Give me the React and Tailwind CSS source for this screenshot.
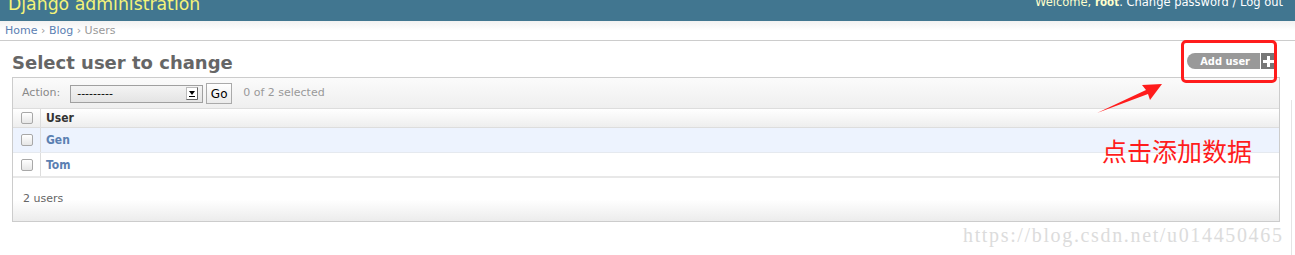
import React from 'react'

const rows = ['Gen', 'Tom']

const boldFont = "font-bold font-stretch-condensed font-['DejaVu_Sans_Condensed','DejaVu_Sans',sans-serif]"

function Checkbox() {
  return (
    <span className="block w-[12px] h-[12px] rounded-[2px] border border-[#a8a8a8] bg-gradient-to-b from-white to-[#e6e6e6]" />
  )
}

export default function App() {
  return (
    <div className="relative w-[1295px] h-[255px] overflow-hidden bg-white font-['DejaVu_Sans',sans-serif] text-[11px] text-[#333]">
      {/* Header */}
      <div className="h-[21px] bg-[#417690] flex justify-between items-start overflow-hidden pl-[8px] pr-[12px]">
        <h1 className="-mt-[6px] text-[17.3px] leading-[21px] text-[#f4f379] whitespace-nowrap">Django administration</h1>
        <div className="-mt-[4px] text-[11.5px] leading-[13px] text-white whitespace-nowrap">
          <span className="text-[#ffffcc]">Welcome, </span>
          <strong className={`${boldFont} text-[#ffffcc]`}>root</strong>
          <span>. Change password / Log out</span>
        </div>
      </div>

      {/* Breadcrumbs */}
      <div className="h-[20px] border-b border-[#ccc] bg-gradient-to-b from-[#f1f1f1] via-white to-white px-[5px] leading-[19px] text-[#999]">
        <span className="text-[#5b80b2]">Home</span> › <span className="text-[#5b80b2]">Blog</span> › Users
      </div>

      {/* Content */}
      <div className="pl-[12px] pr-[15px]">
        <div className="h-[36px] flex justify-between items-start">
          <h1 className="pt-[11px] text-[18px] leading-[22px] font-bold text-[#666]">Select user to change</h1>
          <div className="mt-[12px] mr-[4px] h-[16px] flex">
            <span className={`flex items-center h-full pl-[13px] pr-[10px] rounded-l-[8px] bg-[#999] text-white leading-none ${boldFont}`}>
              Add user
            </span>
            <span className="ml-[1px] w-[15px] h-full bg-[#777] flex items-center justify-center">
              <svg width="11" height="11" viewBox="0 0 11 11">
                <path d="M4 0h3v4h4v3H7v4H4V7H0V4h4z" fill="#fff" />
              </svg>
            </span>
          </div>
        </div>

        <div className="border border-[#ccc]">
          {/* Actions */}
          <div className="h-[31px] border-b border-[#ddd] bg-gradient-to-b from-[#fbfbfb] to-[#efefef] flex items-center pl-[9px] pt-[1px]">
            <span className="text-[#888]">Action:</span>
            <div className="ml-[10px] w-[133px] h-[18px] border border-[#a0a0a0] bg-gradient-to-b from-[#f4f4f4] to-[#e4e4e4] flex items-center justify-between pl-[6px] pr-[4px]">
              <span className="text-black leading-none">---------</span>
              <svg width="12" height="13" viewBox="0 0 12 13">
                <rect x="0.5" y="0.5" width="11" height="12" fill="#fff" stroke="#bbb" />
                <path d="M11.5 0.5v12h-11" fill="none" stroke="#666" />
                <path d="M3 4h6l-3 4z" fill="#000" />
                <rect x="3" y="9" width="6" height="1" fill="#000" />
              </svg>
            </div>
            <span className="ml-[3px] w-[26px] h-[21px] border border-[#aaa] bg-gradient-to-b from-white to-[#ebebeb] flex items-center justify-center text-black text-[12px]">Go</span>
            <span className="ml-[11px] text-[#999]">0 of 2 selected</span>
          </div>

          {/* Table header */}
          <div className="h-[19px] border-b border-[#ddd] bg-gradient-to-b from-white to-[#eeeeee] flex">
            <div className="w-[28px] border-r border-[#ddd] flex items-center pl-[8px]">
              <Checkbox />
            </div>
            <div className={`pl-[5px] flex items-center text-[12px] text-[#333] ${boldFont}`}>User</div>
          </div>

          {rows.map((name, i) => (
            <div
              key={name}
              className={`h-[25px] flex ${i === 0 ? 'bg-[#edf3fe] border-b border-[#e5e9ef]' : 'bg-white border-b-2 border-[#e8e8e8]'}`}
            >
              <div className="w-[28px] border-r border-[#ddd] flex items-center pl-[8px]">
                <Checkbox />
              </div>
              <div className={`pl-[5px] flex items-center text-[12px] text-[#5b80b2] ${boldFont}`}>{name}</div>
            </div>
          ))}

          {/* Paginator */}
          <div className="h-[43px] bg-gradient-to-b from-white via-white to-[#ececec] flex items-center pl-[10px] text-[#666]">
            2 users
          </div>
        </div>
      </div>

      {/* Annotation overlays */}
      <div className="absolute left-[1181px] top-[40px] w-[96px] h-[43px] border-[3px] border-[#ff1c1c] rounded-[5px]" />
      <svg className="absolute left-0 top-0" width="1295" height="255" viewBox="0 0 1295 255">
        <polygon points="1097,113 1146,90 1142,85 1162,84 1150,100 1148,94" fill="#ff1c1c" />
      </svg>
      <div className="absolute left-[1102px] top-[135px] text-[25px] leading-[30px] text-[#ff1c1c] font-['Noto_Sans_CJK_SC',sans-serif]">
        点击添加数据
      </div>
      <div className="absolute left-[963px] top-[223px] text-[20px] leading-[24px] tracking-[1.65px] text-[#dcdcdc] font-['Liberation_Serif',serif]">
        https://blog.csdn.net/u014450465
      </div>
      <div className="absolute left-[1291px] top-[100px] w-px h-[155px] bg-[#e4e4e4]" />
    </div>
  )
}
